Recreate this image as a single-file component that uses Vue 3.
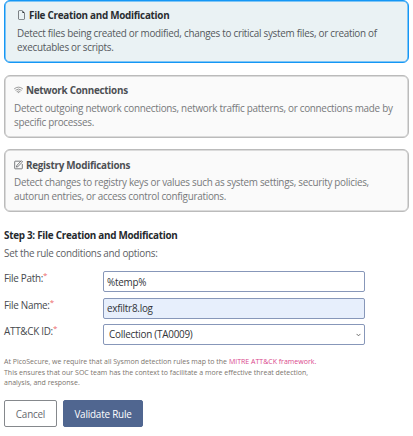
<script setup>
import { ref } from 'vue'

const rules = [
  { id: 'file', title: 'File Creation and Modification', lines: ['Detect files being created or modified, changes to critical system files, or creation of', 'executables or scripts.'] },
  { id: 'network', title: 'Network Connections', lines: ['Detect outgoing network connections, network traffic patterns, or connections made by', 'specific processes.'] },
  { id: 'registry', title: 'Registry Modifications', lines: ['Detect changes to registry keys or values such as system settings, security policies,', 'autorun entries, or access control configurations.'] },
]
const selected = ref('file')
const filePath = ref('%temp%')
const fileName = ref('exfiltr8.log')
</script>

<template>
  <main class="page">
    <section class="rules">
      <article v-for="rule in rules" :key="rule.id" class="card" :class="[rule.id, { selected: selected === rule.id }]" @click="selected = rule.id">
        <h3>
          <svg v-if="rule.id === 'file'" class="icon" viewBox="0 0 16 16"><path d="M14 4.5V14a2 2 0 0 1-2 2H4a2 2 0 0 1-2-2V2a2 2 0 0 1 2-2h5.500zm-3 0A1.500 1.500 0 0 1 9.500 3V1H4a1 1 0 0 0-1 1v12a1 1 0 0 0 1 1h8a1 1 0 0 0 1-1V4.500z" /></svg>
          <svg v-else-if="rule.id === 'network'" class="icon line wifi" viewBox="0 0 16 16"><path d="M.8 5.600a11.500 11.500 0 0 1 14.400 0M3 8.100a8 8 0 0 1 10 0M5.300 10.500a4.500 4.500 0 0 1 5.400 0M7.400 12.600h1.200" /></svg>
          <svg v-else class="icon line" viewBox="0 0 16 16"><path d="M10.500 1.200H2.200a1 1 0 0 0-1 1v11.600a1 1 0 0 0 1 1h11.600a1 1 0 0 0 1-1V7M13.500.8l1.700 1.700-8.400 8.400-2.500.8.800-2.500z" /></svg>
          <span>{{ rule.title }}</span>
        </h3>
        <p><span v-for="line in rule.lines" :key="line">{{ line }}</span></p>
      </article>
    </section>

    <h2>Step 3: File Creation and Modification</h2>
    <p class="intro">Set the rule conditions and options:</p>

    <form @submit.prevent>
      <div class="field">
        <label for="path">File Path:<sup>*</sup></label>
        <input id="path" v-model="filePath" type="text" />
      </div>
      <div class="field">
        <label for="name">File Name:<sup>*</sup></label>
        <input id="name" v-model="fileName" class="filled" type="text" />
      </div>
      <div class="field">
        <label for="attack">ATT&amp;CK ID:<sup>*</sup></label>
        <div id="attack" class="select" role="combobox" tabindex="0">
          <span>Collection (TA0009)</span>
          <svg viewBox="0 0 6 4"><path d="M.7.7 3 3 5.300.7" /></svg>
        </div>
      </div>
      <div class="note">
        <span>At PicoSecure, we require that all Sysmon detection rules map to the <a>MITRE ATT&amp;CK framework.</a></span>
        <span>This ensures that our SOC team has the context to facilitate a more effective threat detection,</span>
        <span>analysis, and response.</span>
      </div>
      <div class="actions">
        <button class="cancel" type="button">Cancel</button>
        <button class="validate" type="submit">Validate Rule</button>
      </div>
    </form>
  </main>
</template>

<style>
body { background: #fff; }
</style>

<style scoped>
* { box-sizing: border-box; }
.page { width: 413px; height: 436px; overflow: hidden; padding: 0 4px; font: 9.9px/14px "Open Sans", sans-serif; letter-spacing: -.275px; color: #46494d; }
h2, h3, p { margin: 0; white-space: nowrap; }
.rules { display: flex; flex-direction: column; gap: 12px; }
.card { height: 63px; padding: 7px 8px 0 9px; border: 1px solid #bbb; border-radius: 6px; background: #fafafa; color: #77797b; box-shadow: inset 0 0 0 .5px #bbb; }
.card.registry { margin-top: -1px; padding-top: 8px; }
.card.selected { padding-left: 12px; border-color: #1497f5; background: #eaf2f4; color: #55595d; box-shadow: inset 0 0 0 .5px #1497f5; }
h3 { display: flex; align-items: center; gap: 3px; height: 14px; font-size: 9.9px; line-height: 14px; color: #4d5054; }
.selected h3 { color: #292d31; }
.card p { margin-top: 4px; line-height: 14px; }
.card.registry p { margin-top: 3px; }
.card p span, .note span { display: block; white-space: nowrap; }
.icon { flex: none; width: 9px; height: 10px; fill: currentColor; }
.line { fill: none; stroke: currentColor; stroke-width: 1.300; stroke-linecap: round; stroke-linejoin: round; }
.wifi { color: #777; }
h2 { margin-top: 16px; font-size: 9.9px; line-height: 14px; color: #25292d; }
.intro { margin-top: 4px; color: #5d6064; }
form { margin-top: 11px; }
.field { display: flex; height: 21px; margin-bottom: 5.500px; }
label { width: 99px; line-height: 14px; white-space: nowrap; }
sup { color: #ed6a6a; font-size: 8px; line-height: 0; }
input, .select { width: 262px; height: 21px; padding: 0 3px; border: 1px solid #8797b9; border-radius: 2px; background: #fff; color: #303338; font: 9.9px/19px "Open Sans", sans-serif; letter-spacing: -.24px; outline: none; }
.filled { background: #e7effc; }
.select { display: flex; align-items: center; justify-content: space-between; padding-left: 5px; }
.select svg { width: 5px; height: 4px; fill: none; stroke: #555; }
.note { margin-top: 12px; font-size: 7px; line-height: 10.500px; letter-spacing: 0; color: #7b746e; }
.note a { color: #d9468c; }
.actions { display: flex; gap: 6px; margin-top: 11px; }
button { height: 27px; padding: 1px 0 0; border: 1px solid #85888c; border-radius: 2px; background: #fff; color: #666a6e; font: 9.9px/20px "Open Sans", sans-serif; letter-spacing: -.2px; }
.cancel { width: 53px; }
.validate { width: 80px; border-color: #506690; background: #506690; color: #fff; }
</style>
